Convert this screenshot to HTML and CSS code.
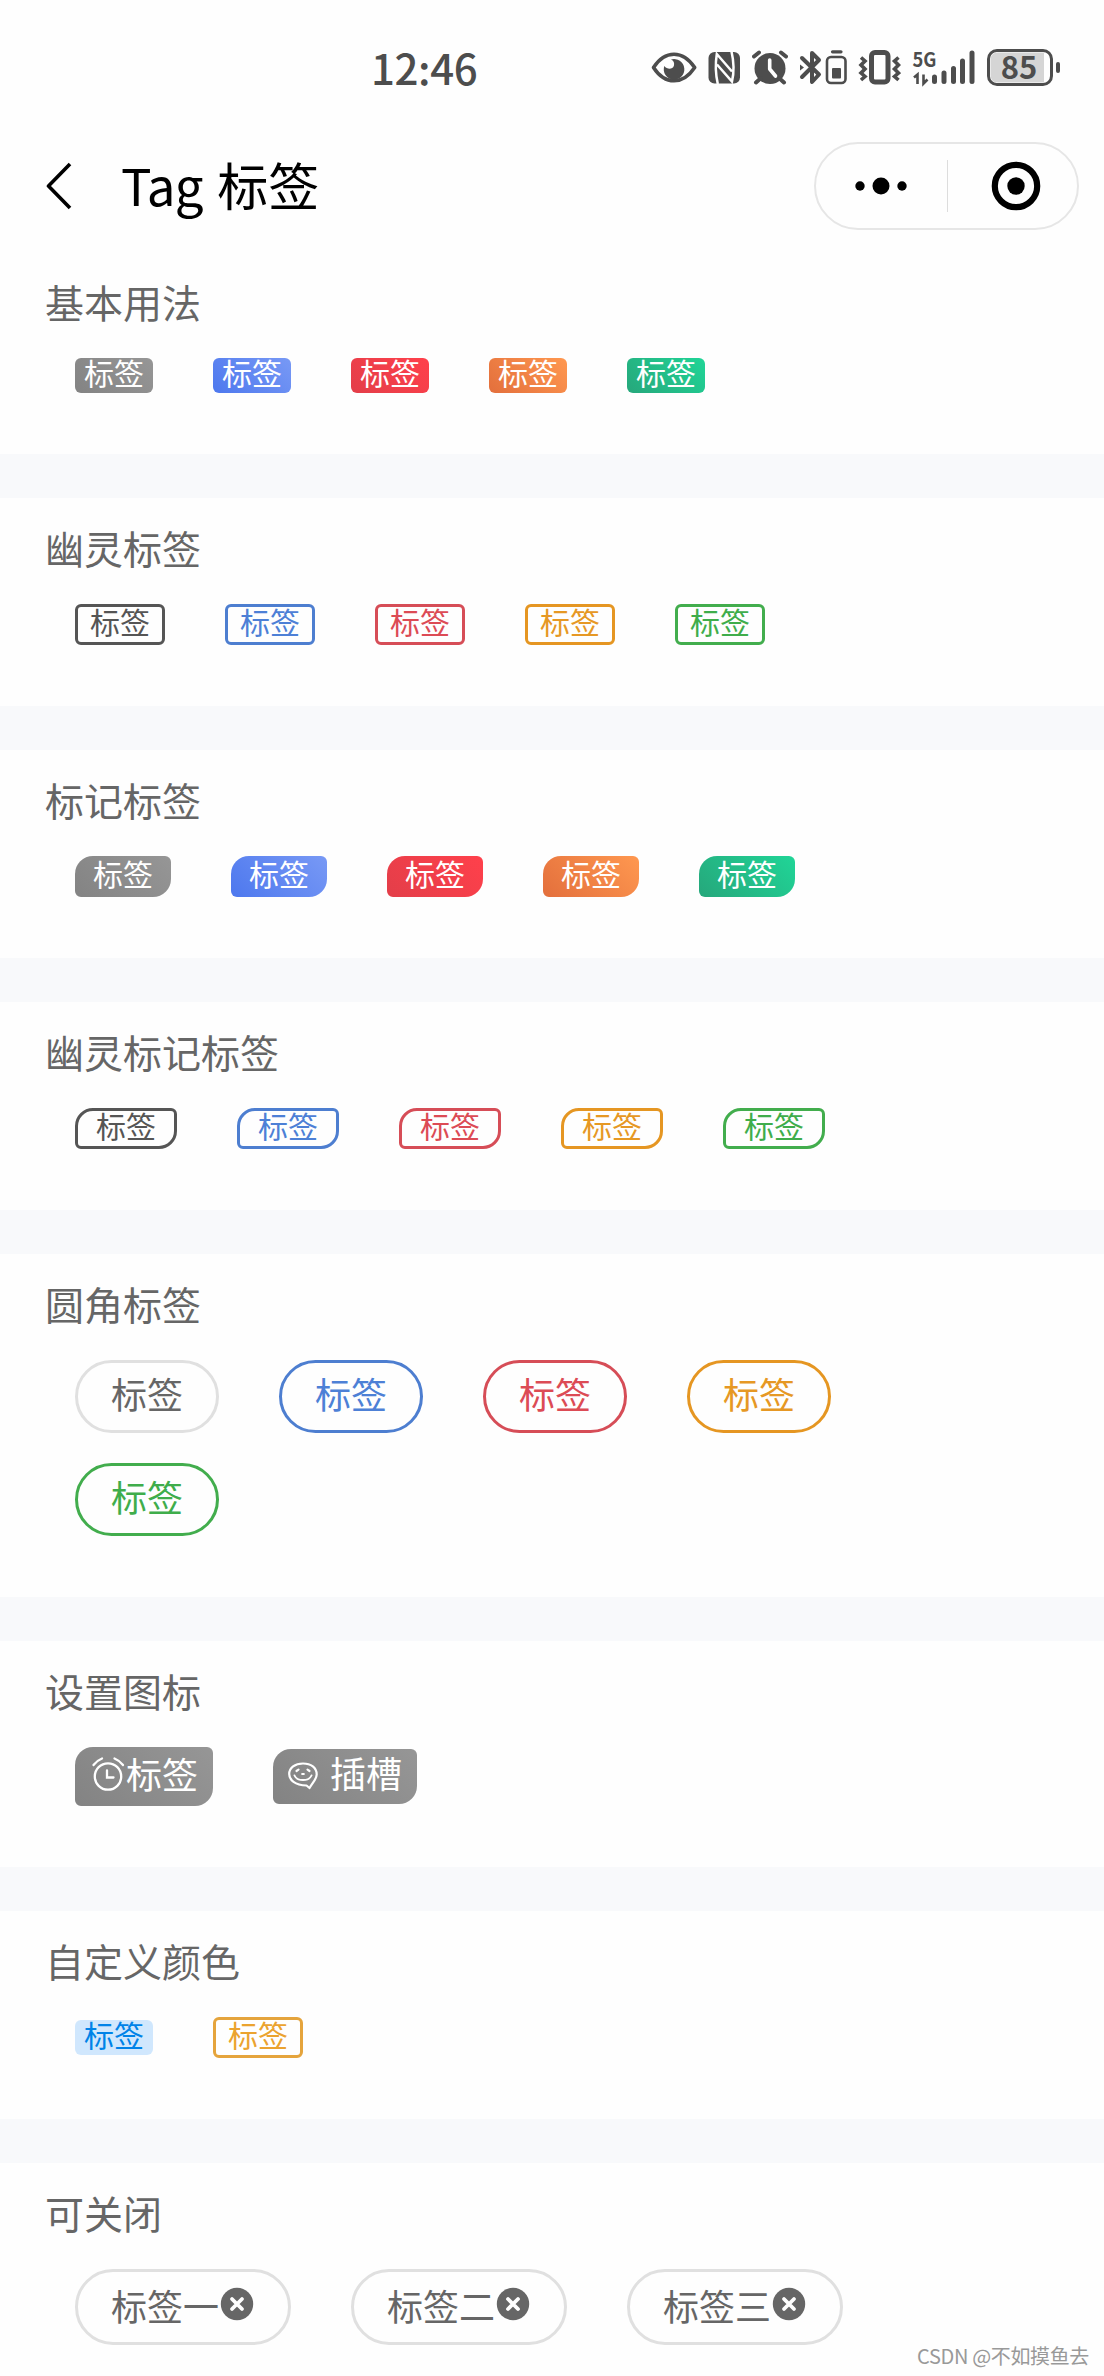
FILE: index.html
```html
<!DOCTYPE html>
<html lang="zh-CN">
<head>
<meta charset="utf-8">
<title>Tag 标签</title>
<link rel="stylesheet" href="styles.css">
</head>
<body>
<header class="status-bar">
  <span class="clock">12:46</span>
  <div class="status-icons">
    <svg width="47" height="40" viewBox="651 48 47 40"><path d="M653.5 67.500C659 59 666 54.200 674 54.200S689 59 694.700 67.500C689 76 682 80.800 674 80.800S659 76 653.500 67.500Z" fill="none" stroke="#4d4d4d" stroke-width="3.600" stroke-linejoin="round"/><path d="M671 59.500A10.300 10.300 0 1 1 664.300 66C667 69.500 672.500 69.500 673.800 66C674.800 63 673.500 60.500 671 59.500Z" fill="#4d4d4d"/></svg>
    <svg class="nfc" width="32" height="40" viewBox="708 48 32 40"><rect x="708.500" y="52" width="31.500" height="31.500" rx="6" fill="#4d4d4d"/><path d="M717.800 84C715.500 74 715.200 64 716.800 54L732 71.500M731.500 51.500C734 62 734 73 732 81.500L717 64.500" fill="none" stroke="#fefefe" stroke-width="2.500"/></svg>
    <svg class="alarm" width="36" height="40" viewBox="752 48 36 40"><circle cx="770" cy="68.500" r="15.500" fill="#4d4d4d"/><path d="M754 56.500L759 52.500M786 56.500L781 52.500M756 82.500L761 78M784 82.500L779 78" stroke="#4d4d4d" stroke-width="4" stroke-linecap="round"/><path d="M769.700 60V69L775.500 76" fill="none" stroke="#fefefe" stroke-width="3.600" stroke-linecap="round" stroke-linejoin="round"/></svg>
    <svg class="bluetooth" width="48" height="40" viewBox="799 48 48 40"><path d="M802 58L819 74.500L812 82V53L819 60L802 77" fill="none" stroke="#4d4d4d" stroke-width="4" stroke-linecap="round" stroke-linejoin="round"/><path d="M800 64.500L804 67.500L800 70.500Z" fill="#4d4d4d"/><rect x="827" y="57" width="18.500" height="26" rx="4" fill="none" stroke="#4d4d4d" stroke-width="2.600"/><path d="M832.500 51.800H841" stroke="#4d4d4d" stroke-width="3.200" stroke-linecap="round"/><rect x="832" y="68" width="9" height="10.500" rx="1" fill="#4d4d4d"/></svg>
    <svg class="vibrate" width="43" height="40" viewBox="858 48 43 40"><rect x="871.500" y="52.500" width="16.500" height="29.500" rx="3.500" fill="none" stroke="#4d4d4d" stroke-width="5"/><path d="M861 57.500L865 61L861 65L865 69L861 73L865 76.500L861 80M898.500 57.500L894.500 61L898.500 65L894.500 69L898.500 73L894.500 76.500L898.500 80" fill="none" stroke="#4d4d4d" stroke-width="3.600"/></svg>
    <svg class="signal" width="64" height="52" viewBox="912 40 64 52"><text x="912.500" y="66.500" class="network" textLength="24" lengthAdjust="spacingAndGlyphs">5G</text><path d="M914 77.500L917.500 74.500V84M923.500 74.500V83.500L927.500 79.500" fill="none" stroke="#4d4d4d" stroke-width="2.600"/><path d="M934.500 77V81.500M944 73V81.500M953.500 68.500V81.500M962.500 61V81.500M972 53V81.500" stroke="#4d4d4d" stroke-width="5" stroke-linecap="round"/></svg>
    <svg class="battery" width="74" height="52" viewBox="987 40 74 52"><rect x="988.500" y="50.500" width="63" height="34" rx="8.500" fill="#fefefe" stroke="#4d4d4d" stroke-width="3"/><path d="M998 52.500H1044V82.500H998Q990.500 82.500 990.500 75V60Q990.500 52.500 998 52.500Z" fill="#d5d5d5"/><text x="1019" y="79" class="level" text-anchor="middle">85</text><rect x="1056" y="62" width="4" height="11" rx="2" fill="#4d4d4d"/></svg>
  </div>
</header>

<nav class="nav-bar">
  <svg class="back" width="26" height="50" viewBox="46 161 26 50"><path d="M70 164L48.500 186L70 208" fill="none" stroke="#000" stroke-width="3.600" stroke-linejoin="round"/></svg>
  <h1 class="nav-title"><span class="latin">Tag</span> 标签</h1>
  <div class="capsule">
    <svg class="more" width="54" height="20" viewBox="0 0 54 20"><circle cx="6" cy="10" r="4.700"/><circle cx="27" cy="10" r="8.500"/><circle cx="48" cy="10" r="4.700"/></svg>
    <span class="capsule-line"></span>
    <svg class="close-app" width="50" height="50" viewBox="0 0 50 50"><circle cx="25" cy="25" r="21.200" fill="none" stroke="#000" stroke-width="6.200"/><circle cx="25" cy="25" r="8.700"/></svg>
  </div>
</nav>

<main class="demo">
  <section class="block">
    <h2 class="block-title">基本用法</h2>
    <div class="tags"><span class="tag gray">标签</span><span class="tag blue">标签</span><span class="tag red">标签</span><span class="tag orange">标签</span><span class="tag green">标签</span></div>
  </section>
  <section class="block">
    <h2 class="block-title">幽灵标签</h2>
    <div class="tags"><span class="tag plain p-gray">标签</span><span class="tag plain p-blue">标签</span><span class="tag plain p-red">标签</span><span class="tag plain p-orange">标签</span><span class="tag plain p-green">标签</span></div>
  </section>
  <section class="block">
    <h2 class="block-title">标记标签</h2>
    <div class="tags"><span class="tag mark gray">标签</span><span class="tag mark blue">标签</span><span class="tag mark red">标签</span><span class="tag mark orange">标签</span><span class="tag mark green">标签</span></div>
  </section>
  <section class="block">
    <h2 class="block-title">幽灵标记标签</h2>
    <div class="tags"><span class="tag plain mark p-gray">标签</span><span class="tag plain mark p-blue">标签</span><span class="tag plain mark p-red">标签</span><span class="tag plain mark p-orange">标签</span><span class="tag plain mark p-green">标签</span></div>
  </section>
  <section class="block">
    <h2 class="block-title">圆角标签</h2>
    <div class="tags"><span class="tag round">标签</span><span class="tag round p-blue">标签</span><span class="tag round p-red">标签</span><span class="tag round p-orange">标签</span><span class="tag round p-green">标签</span></div>
  </section>
  <section class="block">
    <h2 class="block-title">设置图标</h2>
    <div class="tags">
      <span class="tag mark gray with-icon"><svg width="36" height="36" viewBox="0 0 36 36"><g fill="none" stroke="#fff" stroke-width="2.300" stroke-linecap="round"><circle cx="18" cy="20.500" r="13.200"/><path d="M17 14.500V21.500H23.500M3.500 9Q7 4.500 12 2.500M24.500 2.500Q29.500 4.500 33 9"/></g></svg>标签</span>
      <span class="tag mark gray with-slot"><svg width="30" height="30" viewBox="0 0 30 30"><g fill="none" stroke="#fff" stroke-width="2.200" stroke-linecap="round" stroke-linejoin="round"><path d="M18.500 25.500C7 25 1.200 20 1.200 14C1.200 7.500 7 3.500 15 3.500S28.700 7.500 28.700 14.500C28.700 19 25 22 21.500 28Z"/><path d="M6.500 15.500C9 21.500 21 21.500 23.500 15.500" stroke-width="1.900"/><path d="M8.500 11L10.500 9.700M21.500 11L19.500 9.700M14.200 14H15.800"/></g></svg>插槽</span>
    </div>
  </section>
  <section class="block">
    <h2 class="block-title">自定义颜色</h2>
    <div class="tags"><span class="tag custom-fill">标签</span><span class="tag plain custom-line">标签</span></div>
  </section>
  <section class="block">
    <h2 class="block-title">可关闭</h2>
    <div class="tags">
      <span class="tag round closable">标签一<svg width="36" height="36" viewBox="0 0 36 36"><circle cx="18" cy="18" r="16.200" fill="#666"/><path d="M13 13L23 23M23 13L13 23" stroke="#fefefe" stroke-width="3.800" stroke-linecap="round"/></svg></span>
      <span class="tag round closable">标签二<svg width="36" height="36" viewBox="0 0 36 36"><circle cx="18" cy="18" r="16.200" fill="#666"/><path d="M13 13L23 23M23 13L13 23" stroke="#fefefe" stroke-width="3.800" stroke-linecap="round"/></svg></span>
      <span class="tag round closable">标签三<svg width="36" height="36" viewBox="0 0 36 36"><circle cx="18" cy="18" r="16.200" fill="#666"/><path d="M13 13L23 23M23 13L13 23" stroke="#fefefe" stroke-width="3.800" stroke-linecap="round"/></svg></span>
    </div>
  </section>
</main>
<div class="watermark">CSDN @不如摸鱼去</div>
</body>
</html>
```

FILE: styles.css
```css
* { box-sizing: border-box; }

body {
  margin: 0;
  height: 2376px;
  position: relative;
  overflow: hidden;
  background: #fefefe;
  font-family: "Noto Sans CJK SC", sans-serif;
}

svg { display: block; flex: none; }

/* Status bar */
.status-bar {
  height: 130px;
  padding: 48px 43px 0 371px;
  display: flex;
  align-items: flex-start;
  justify-content: space-between;
}
.clock {
  font-size: 42px;
  line-height: 37px;
  font-weight: 500;
  letter-spacing: -0.4px;
  color: #4d4d4d;
}
.status-icons { display: flex; }
.nfc { margin-left: 10px; }
.alarm { margin-left: 12px; }
.bluetooth { margin-left: 11px; }
.vibrate { margin-left: 11px; }
.signal { margin: -8px 0 0 11px; }
.battery { margin: -8px 0 0 11px; }
.network { font-size: 20px; font-weight: 700; fill: #4d4d4d; }
.level { font-size: 31px; font-weight: 700; fill: #4d4d4d; }

/* Navigation bar */
.nav-bar {
  height: 122px;
  padding: 12px 25px 0 46px;
  display: flex;
  align-items: flex-start;
}
.back { margin-top: 19px; }
.nav-title {
  margin: 0 auto 0 49px;
  font-size: 51px;
  line-height: 84px;
  font-weight: 400;
  color: #000;
  white-space: nowrap;
}
.latin { letter-spacing: -0.7px; margin-right: 3px; }
.capsule {
  width: 265px;
  height: 88px;
  border: 2px solid #e6e6e6;
  border-radius: 44px;
  display: flex;
  align-items: center;
}
.more { margin-left: 37.500px; }
.capsule-line { width: 1px; height: 52px; margin-left: 39px; background: #ddd; }
.close-app { margin-left: 43px; }

/* Demo blocks */
.demo { display: flex; flex-direction: column; gap: 44px; background: #f8f9fb; }
.block { padding-bottom: 61px; background: #fefefe; }
.block-title {
  margin: 0;
  height: 106px;
  padding: 20px 45px 0;
  font-size: 39px;
  line-height: 58px;
  font-weight: 400;
  color: #666;
}
.tags {
  padding: 0 75px;
  display: flex;
  flex-wrap: wrap;
  align-items: center;
  gap: 30px 60px;
}

/* Tags */
.tag {
  display: flex;
  height: 35px;
  padding: 0 9px;
  border-radius: 6px;
  font-size: 30px;
  line-height: 28px;
  color: #fff;
}
.plain { height: 41px; padding: 0 12px; border: 3px solid; }
.mark { height: 41px; padding: 3px 18px 0; border-radius: 18px 6px; }
.plain.mark { padding-top: 0; }

.gray { background: linear-gradient(45deg, #838383, #969696); }
.blue { background: linear-gradient(45deg, #4d78ee, #7899f5); }
.red { background: linear-gradient(45deg, #e33e49, #ff404b); }
.orange { background: linear-gradient(45deg, #e36f3c, #ff9850); }
.green { background: linear-gradient(45deg, #26a77b, #20d597); }
.p-gray { color: #555; }
.tag.p-blue { color: #4d80d6; border-color: #4d7ed0; }
.tag.p-red { color: #dc4b55; border-color: #d64d57; }
.tag.p-orange { color: #e69824; border-color: #e59622; }
.tag.p-green { color: #3fad4b; border-color: #42ad4d; }

.round {
  height: 73px;
  padding: 0 33px;
  border: 3px solid #e0e0e0;
  border-radius: 38px;
  font-size: 36px;
  line-height: 60px;
  color: #666;
}
.closable { height: 76px; line-height: 66px; align-items: flex-start; }
.closable svg { margin-top: 14px; }

.with-icon { height: 59px; padding: 0 15px; font-size: 36px; line-height: 53px; }
.with-icon svg { margin-top: 9px; }
.with-slot { height: 55px; padding: 0 15px; gap: 12px; font-size: 36px; line-height: 47px; }
.with-slot svg { margin-top: 11px; }

.custom-fill { background: #d0e7fd; color: #0083e8; }
.custom-line { color: #eba32f; border-color: #e5a43c; }

.watermark {
  position: absolute;
  right: 15px;
  bottom: 6px;
  font-size: 20px;
  line-height: 28px;
  letter-spacing: -0.35px;
  color: #999;
}
```
